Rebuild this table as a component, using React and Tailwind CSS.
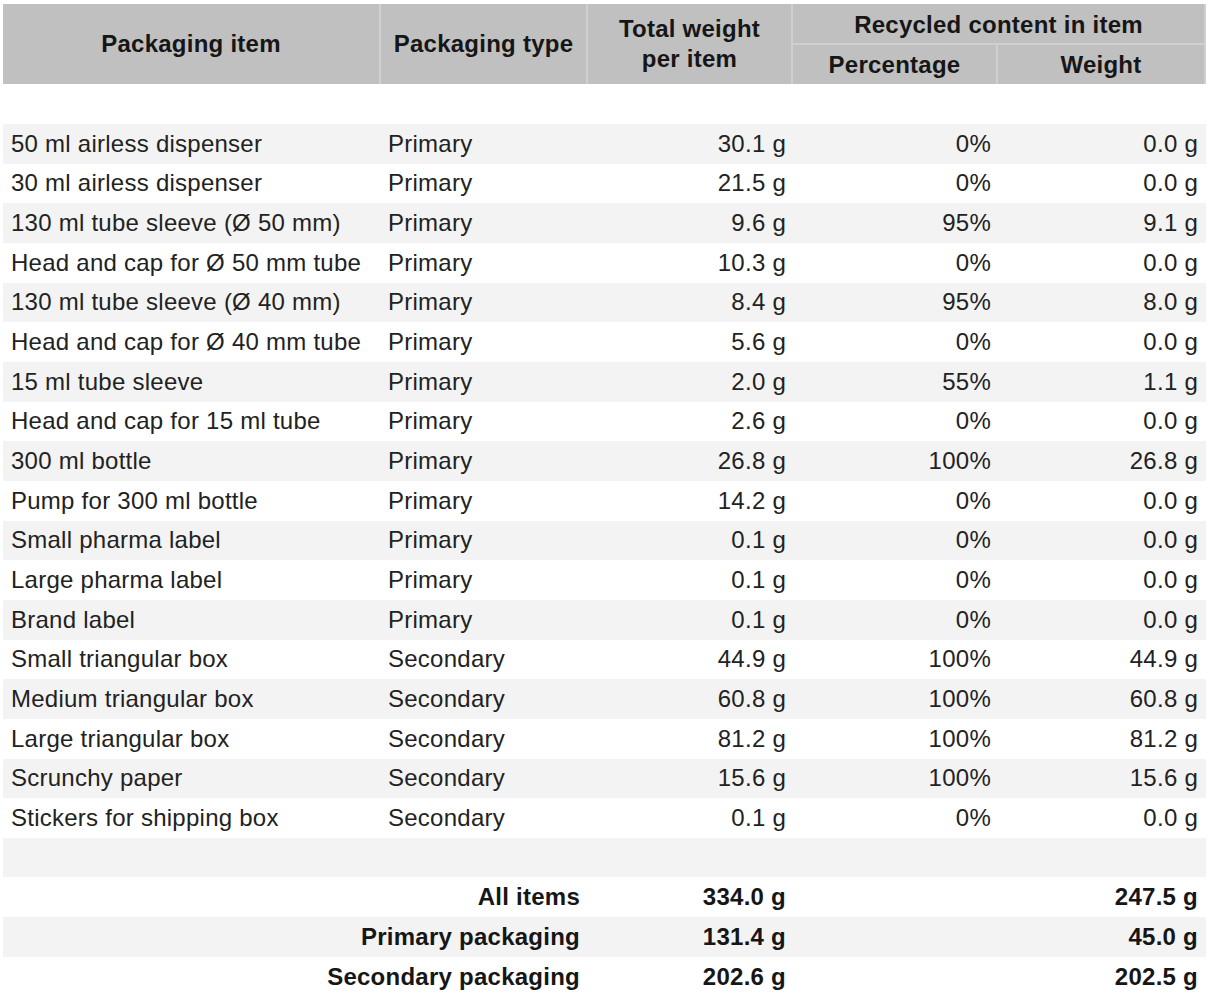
import React from "react";

const rows = [
  ["50 ml airless dispenser", "Primary", "30.1 g", "0%", "0.0 g"],
  ["30 ml airless dispenser", "Primary", "21.5 g", "0%", "0.0 g"],
  ["130 ml tube sleeve (Ø 50 mm)", "Primary", "9.6 g", "95%", "9.1 g"],
  ["Head and cap for Ø 50 mm tube", "Primary", "10.3 g", "0%", "0.0 g"],
  ["130 ml tube sleeve (Ø 40 mm)", "Primary", "8.4 g", "95%", "8.0 g"],
  ["Head and cap for Ø 40 mm tube", "Primary", "5.6 g", "0%", "0.0 g"],
  ["15 ml tube sleeve", "Primary", "2.0 g", "55%", "1.1 g"],
  ["Head and cap for 15 ml tube", "Primary", "2.6 g", "0%", "0.0 g"],
  ["300 ml bottle", "Primary", "26.8 g", "100%", "26.8 g"],
  ["Pump for 300 ml bottle", "Primary", "14.2 g", "0%", "0.0 g"],
  ["Small pharma label", "Primary", "0.1 g", "0%", "0.0 g"],
  ["Large pharma label", "Primary", "0.1 g", "0%", "0.0 g"],
  ["Brand label", "Primary", "0.1 g", "0%", "0.0 g"],
  ["Small triangular box", "Secondary", "44.9 g", "100%", "44.9 g"],
  ["Medium triangular box", "Secondary", "60.8 g", "100%", "60.8 g"],
  ["Large triangular box", "Secondary", "81.2 g", "100%", "81.2 g"],
  ["Scrunchy paper", "Secondary", "15.6 g", "100%", "15.6 g"],
  ["Stickers for shipping box", "Secondary", "0.1 g", "0%", "0.0 g"],
];

const totals = [
  ["All items", "334.0 g", "247.5 g"],
  ["Primary packaging", "131.4 g", "45.0 g"],
  ["Secondary packaging", "202.6 g", "202.5 g"],
];

const cols = "grid grid-cols-[378px_207px_205px_205px_208px]";

export default function App() {
  return (
    <div
      className="bg-white w-[1212px] h-[1002px] pl-[3px] pt-[4px] text-[24px] tracking-[0.25px] text-[#222222]"
      style={{ fontFamily: '"Liberation Sans", Arial, sans-serif' }}
    >
      <div className="w-[1203px]">
        {/* Header */}
        <div className={`${cols} h-[80px] bg-[#c0c0c0] font-bold text-[#161616]`}>
          <div className="flex items-center justify-center border-r-2 border-[#d0d0d0]">
            Packaging item
          </div>
          <div className="flex items-center justify-center border-r-2 border-[#d0d0d0]">
            Packaging type
          </div>
          <div className="flex flex-col items-center justify-center border-r-2 border-[#d0d0d0] leading-[30px]">
            <span>Total weight</span>
            <span>per item</span>
          </div>
          <div className="col-span-2 flex flex-col border-r-2 border-[#d0d0d0]">
            <div className="h-[41px] pt-[2px] flex items-center justify-center border-b-2 border-[#d0d0d0]">
              Recycled content in item
            </div>
            <div className="flex-1 grid grid-cols-[205px_1fr]">
              <div className="flex items-center justify-center border-r-2 border-[#d0d0d0]">
                Percentage
              </div>
              <div className="flex items-center justify-center">Weight</div>
            </div>
          </div>
        </div>

        {/* spacer row */}
        <div className="h-[40px]" />

        {/* Data rows */}
        {rows.map((r, i) => (
          <div
            key={i}
            className={`${cols} h-[39.67px] items-center ${i % 2 === 0 ? "bg-[#f3f3f3]" : "bg-white"}`}
          >
            <div className="pl-[8px] whitespace-nowrap">{r[0]}</div>
            <div className="pl-[7px]">{r[1]}</div>
            <div className="pr-[7px] text-right">{r[2]}</div>
            <div className="pr-[7px] text-right">{r[3]}</div>
            <div className="pr-[8px] text-right">{r[4]}</div>
          </div>
        ))}

        {/* empty gray row */}
        <div className="h-[39.67px] bg-[#f3f3f3]" />

        {/* totals */}
        {totals.map((t, i) => (
          <div
            key={i}
            className={`${cols} h-[39.67px] items-center font-bold text-[#161616] ${i === 1 ? "bg-[#f3f3f3]" : "bg-white"}`}
          >
            <div className="col-span-2 pr-[8px] text-right whitespace-nowrap">{t[0]}</div>
            <div className="pr-[7px] text-right">{t[1]}</div>
            <div />
            <div className="pr-[8px] text-right">{t[2]}</div>
          </div>
        ))}
      </div>
    </div>
  );
}
